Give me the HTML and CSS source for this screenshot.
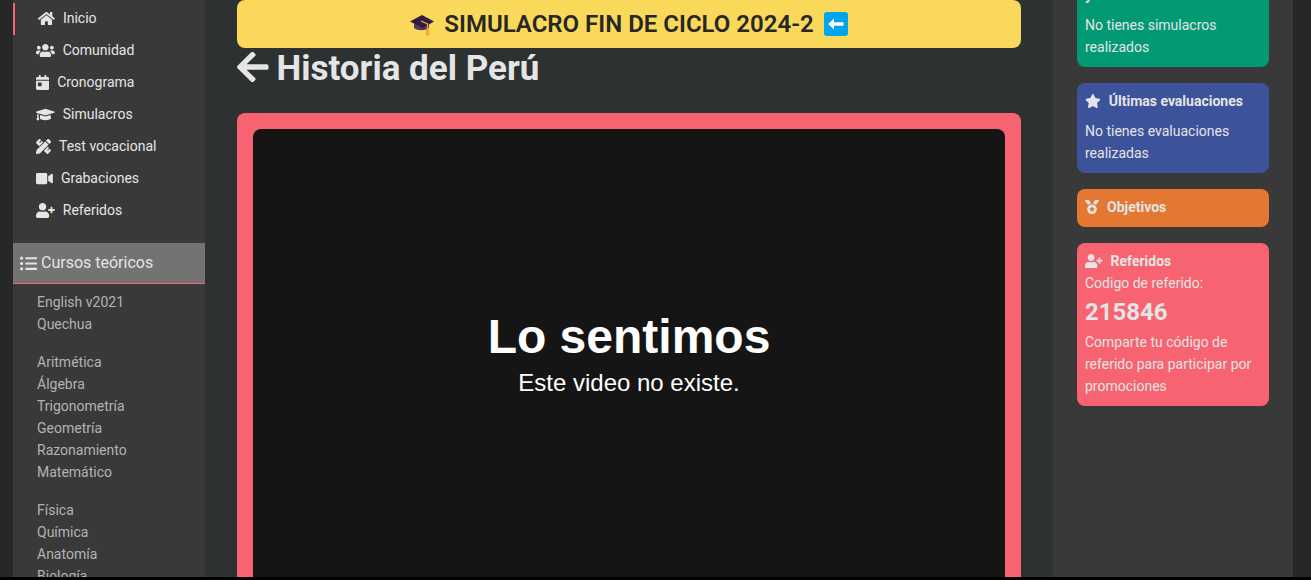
FILE: index.html
```
<!DOCTYPE html>
<html lang="es">
<head>
  <meta charset="UTF-8" />
  <meta name="viewport" content="width=device-width, initial-scale=1" />
  <title>Historia del Perú</title>
  <link rel="stylesheet" href="styles.css">
</head>
<body>

  <div class="layout">
    <aside class="sidebar">
      <nav class="menu">
        <a href="#" class="active"><svg class="icon" viewBox="0 0 576 512"><path d="M280.37 148.26L96 300.11V464a16 16 0 0 0 16 16l112.06-.29a16 16 0 0 0 15.92-16V368a16 16 0 0 1 16-16h64a16 16 0 0 1 16 16v95.64a16 16 0 0 0 16 16.05L464 480a16 16 0 0 0 16-16V300L295.67 148.26a12.19 12.19 0 0 0-15.3 0zM571.6 251.47L488 182.56V44.05a12 12 0 0 0-12-12h-56a12 12 0 0 0-12 12v72.61L318.47 43a48 48 0 0 0-61 0L4.34 251.47a12 12 0 0 0-1.6 16.9l25.5 31A12 12 0 0 0 45.15 301l235.22-193.74a12.19 12.19 0 0 1 15.3 0L530.9 301a12 12 0 0 0 16.9-1.6l25.5-31a12 12 0 0 0-1.7-16.93z"/></svg>Inicio</a>
        <a href="#"><svg class="icon" viewBox="0 0 640 512"><path d="M96 224c35.3 0 64-28.7 64-64s-28.7-64-64-64-64 28.7-64 64 28.7 64 64 64zm448 0c35.3 0 64-28.7 64-64s-28.7-64-64-64-64 28.7-64 64 28.7 64 64 64zm32 32h-64c-17.6 0-33.5 7.1-45.1 18.6 40.3 22.1 68.9 62 75.1 109.4h66c17.7 0 32-14.3 32-32v-32c0-35.3-28.7-64-64-64zm-256 0c61.9 0 112-50.1 112-112S381.9 32 320 32 208 82.1 208 144s50.1 112 112 112zm76.8 32h-8.3c-20.8 10-43.9 16-68.5 16s-47.6-6-68.5-16h-8.3C179.6 288 128 339.6 128 403.2V432c0 26.5 21.5 48 48 48h288c26.5 0 48-21.5 48-48v-28.8c0-63.6-51.6-115.2-115.2-115.2zm-223.7-13.4C161.5 263.1 145.6 256 128 256H64c-35.3 0-64 28.7-64 64v32c0 17.7 14.3 32 32 32h65.9c6.3-47.4 34.9-87.3 75.2-109.4z"/></svg>Comunidad</a>
        <a href="#"><svg class="icon" viewBox="0 0 448 512"><path d="M0 464c0 26.5 21.5 48 48 48h352c26.5 0 48-21.5 48-48V192H0v272zm64-192c0-8.8 7.2-16 16-16h96c8.8 0 16 7.2 16 16v96c0 8.8-7.2 16-16 16H80c-8.8 0-16-7.2-16-16v-96zM400 64h-48V16c0-8.8-7.2-16-16-16h-32c-8.8 0-16 7.2-16 16v48H160V16c0-8.8-7.2-16-16-16h-32c-8.8 0-16 7.2-16 16v48H48C21.5 64 0 85.5 0 112v48h448v-48c0-26.5-21.5-48-48-48z"/></svg>Cronograma</a>
        <a href="#"><svg class="icon" viewBox="0 0 640 512"><path d="M622.34 153.2L343.4 67.5c-15.2-4.67-31.6-4.67-46.79 0L17.66 153.2c-23.54 7.23-23.54 38.36 0 45.59l48.63 14.94c-10.67 13.19-17.23 29.28-17.88 46.9C38.78 266.15 32 276.11 32 288c0 10.78 5.68 19.85 13.86 25.65L20.33 428.53C18.11 438.52 25.71 448 35.94 448h56.11c10.24 0 17.84-9.48 15.62-19.47L82.14 313.65C90.32 307.85 96 298.78 96 288c0-11.57-6.47-21.25-15.66-26.87.76-15.02 8.44-28.3 20.69-36.72L296.6 284.5c9.06 2.78 26.44 6.25 46.79 0l278.95-85.7c23.55-7.24 23.55-38.36 0-45.6zM352.79 315.09c-28.53 8.76-52.84 3.92-65.59 0l-145.02-44.55L128 384c0 35.35 85.96 64 192 64s192-28.65 192-64l-14.18-113.47-145.03 44.56z"/></svg>Simulacros</a>
        <a href="#"><svg class="icon" viewBox="0 0 512 512"><path d="M109.46 244.04l134.58-134.56-44.12-44.12-61.68 61.68a7.919 7.919 0 0 1-11.21 0l-11.21-11.21c-3.1-3.1-3.1-8.12 0-11.21l61.68-61.68-33.64-33.65C131.47-3.1 111.39-3.1 99 9.29L9.29 99c-12.38 12.39-12.39 32.47 0 44.86l100.17 100.18zm388.47-116.8c18.76-18.76 18.75-49.17 0-67.93l-45.25-45.25c-18.76-18.76-49.18-18.76-67.95 0l-46.02 46.01 113.2 113.2 46.02-46.03zM316.08 82.71l-297 296.96L.32 487.11c-2.53 14.49 10.09 27.11 24.59 24.56l107.45-18.84L429.28 195.9 316.08 82.71zm186.63 285.43l-33.64-33.64-61.68 61.68c-3.1 3.1-8.12 3.1-11.21 0l-11.21-11.21c-3.09-3.1-3.09-8.12 0-11.21l61.68-61.68-44.14-44.14L267.93 402.5l100.21 100.2c12.39 12.39 32.47 12.39 44.86 0l89.71-89.7c12.39-12.39 12.39-32.47 0-44.86z"/></svg>Test vocacional</a>
        <a href="#"><svg class="icon" viewBox="0 0 576 512"><path d="M336.2 64H47.8C21.4 64 0 85.4 0 111.8v288.4C0 426.6 21.4 448 47.8 448h288.4c26.4 0 47.8-21.4 47.8-47.8V111.8c0-26.4-21.4-47.8-47.8-47.8zm189.4 37.7L416 177.3v157.4l109.6 75.5c21.2 14.6 50.4-.3 50.4-25.8V127.5c0-25.4-29.1-40.4-50.4-25.8z"/></svg>Grabaciones</a>
        <a href="#"><svg class="icon" viewBox="0 0 640 512"><path d="M624 208h-64v-64c0-8.8-7.2-16-16-16h-32c-8.8 0-16 7.2-16 16v64h-64c-8.8 0-16 7.2-16 16v32c0 8.8 7.2 16 16 16h64v64c0 8.8 7.2 16 16 16h32c8.8 0 16-7.2 16-16v-64h64c8.8 0 16-7.2 16-16v-32c0-8.8-7.2-16-16-16zm-400 48c70.7 0 128-57.3 128-128S294.7 0 224 0 96 57.3 96 128s57.3 128 128 128zm89.6 32h-16.7c-22.2 10.2-46.9 16-72.9 16s-50.6-5.8-72.9-16h-16.7C60.2 288 0 348.2 0 422.4V464c0 26.5 21.5 48 48 48h352c26.5 0 48-21.5 48-48v-41.6c0-74.2-60.2-134.4-134.4-134.4z"/></svg>Referidos</a>
      </nav>

      <h2 class="courses-title"><svg class="icon" viewBox="0 0 512 512"><path d="M48 48a48 48 0 1 0 48 48 48 48 0 0 0-48-48zm0 160a48 48 0 1 0 48 48 48 48 0 0 0-48-48zm0 160a48 48 0 1 0 48 48 48 48 0 0 0-48-48zm448 16H176a16 16 0 0 0-16 16v32a16 16 0 0 0 16 16h320a16 16 0 0 0 16-16v-32a16 16 0 0 0-16-16zm0-320H176a16 16 0 0 0-16 16v32a16 16 0 0 0 16 16h320a16 16 0 0 0 16-16V80a16 16 0 0 0-16-16zm0 160H176a16 16 0 0 0-16 16v32a16 16 0 0 0 16 16h320a16 16 0 0 0 16-16v-32a16 16 0 0 0-16-16z"/></svg>Cursos teóricos</h2>

      <div class="courses">
        <ul>
          <li><a href="#">English v2021</a></li>
          <li><a href="#">Quechua</a></li>
        </ul>
        <ul>
          <li><a href="#">Aritmética</a></li>
          <li><a href="#">Álgebra</a></li>
          <li><a href="#">Trigonometría</a></li>
          <li><a href="#">Geometría</a></li>
          <li><a href="#">Razonamiento Matemático</a></li>
        </ul>
        <ul>
          <li><a href="#">Física</a></li>
          <li><a href="#">Química</a></li>
          <li><a href="#">Anatomía</a></li>
          <li><a href="#">Biología</a></li>
        </ul>
      </div>
    </aside>

    <main class="content">
      <a href="#" class="banner">
        <svg class="emoji" viewBox="0 0 24 24">
          <path fill="#533566" d="M4 10v6c4 3 11 3 15 0v-6z"/>
          <path fill="#321b41" d="M0 9.5 12 3l12 6.5L13 16z"/>
          <path fill="none" stroke="#f9a82f" stroke-width="1.3" d="M11 9l6.5 3v6"/>
          <path fill="#f9a82f" d="M16.5 17h2.5l.5 6c-1 1-3 1-4 0z"/>
        </svg>
        SIMULACRO FIN DE CICLO 2024-2
        <svg class="emoji" viewBox="0 0 24 24">
          <rect fill="#00a6ed" width="24" height="24" rx="3"/>
          <path fill="#fff" d="M4 12l6-5.5v3.7h9.5v3.6H10v3.7z"/>
        </svg>
      </a>

      <h1 class="page-title">
        <a href="#" aria-label="Volver"><svg viewBox="0 0 448 512"><path d="M257.5 445.1l-22.2 22.2c-9.4 9.4-24.6 9.4-33.9 0L7 273c-9.4-9.4-9.4-24.6 0-33.9L201.4 44.7c9.4-9.4 24.6-9.4 33.9 0l22.2 22.2c9.5 9.5 9.3 25-.4 34.3L136.6 216H424c13.3 0 24 10.7 24 24v32c0 13.3-10.7 24-24 24H136.6l120.5 114.8c9.8 9.3 10 24.8.4 34.3z"/></svg></a>
        Historia del Perú
      </h1>

      <div class="video-card">
        <div class="video">
          <h2>Lo sentimos</h2>
          <p>Este video no existe.</p>
        </div>
      </div>
    </main>

    <aside class="widgets">
      <section class="card green">
        <h3>y</h3>
        <p>No tienes simulacros realizados</p>
      </section>

      <section class="card blue">
        <h3><svg class="icon" viewBox="0 0 576 512"><path d="M259.3 17.8L194 150.2 47.9 171.5c-26.2 3.8-36.7 36.1-17.7 54.6l105.7 103-25 145.5c-4.5 26.3 23.2 46 46.4 33.7L288 439.6l130.7 68.7c23.2 12.2 50.9-7.4 46.4-33.7l-25-145.5 105.7-103c19-18.5 8.5-50.8-17.7-54.6L382 150.2 316.7 17.8c-11.7-23.6-45.6-23.9-57.4 0z"/></svg>Últimas evaluaciones</h3>
        <p>No tienes evaluaciones realizadas</p>
      </section>

      <section class="card orange">
        <h3><svg class="icon" viewBox="0 0 512 512"><path d="M223.75 130.75L154.62 15.54A31.997 31.997 0 0 0 127.18 0H16.03C3.08 0-4.5 14.57 2.92 25.18l111.27 158.96c29.72-27.77 67.52-46.83 109.56-53.39zM495.97 0H384.82c-11.24 0-21.66 5.9-27.44 15.54l-69.13 115.21c42.04 6.56 79.84 25.62 109.56 53.38L509.08 25.18C516.5 14.57 508.92 0 495.97 0zM256 160c-97.2 0-176 78.8-176 176s78.8 176 176 176 176-78.8 176-176-78.8-176-176-176zm92.52 157.26l-37.93 36.96 8.97 52.22c1.6 9.36-8.26 16.51-16.65 12.09L256 393.88l-46.9 24.65c-8.4 4.45-18.25-2.74-16.65-12.09l8.97-52.22-37.93-36.96c-6.82-6.64-3.05-18.23 6.35-19.59l52.43-7.64 23.43-47.52c2.11-4.28 6.19-6.39 10.28-6.39 4.11 0 8.22 2.14 10.33 6.39l23.43 47.52 52.43 7.64c9.4 1.36 13.17 12.95 6.35 19.59z"/></svg>Objetivos</h3>
      </section>

      <section class="card pink">
        <h3><svg class="icon" viewBox="0 0 640 512"><path d="M624 208h-64v-64c0-8.8-7.2-16-16-16h-32c-8.8 0-16 7.2-16 16v64h-64c-8.8 0-16 7.2-16 16v32c0 8.8 7.2 16 16 16h64v64c0 8.8 7.2 16 16 16h32c8.8 0 16-7.2 16-16v-64h64c8.8 0 16-7.2 16-16v-32c0-8.8-7.2-16-16-16zm-400 48c70.7 0 128-57.3 128-128S294.7 0 224 0 96 57.3 96 128s57.3 128 128 128zm89.6 32h-16.7c-22.2 10.2-46.9 16-72.9 16s-50.6-5.8-72.9-16h-16.7C60.2 288 0 348.2 0 422.4V464c0 26.5 21.5 48 48 48h352c26.5 0 48-21.5 48-48v-41.6c0-74.2-60.2-134.4-134.4-134.4z"/></svg>Referidos</h3>
        <p>Codigo de referido:</p>
        <strong class="code">215846</strong>
        <p>Comparte tu código de referido para participar por promociones</p>
      </section>
    </aside>
  </div>

</body>
</html>
```

FILE: styles.css
```
* {
  box-sizing: border-box;
}

body {
  margin: 0;
  height: 100vh;
  overflow: hidden;
  font-family: Roboto, sans-serif;
  font-size: 14px;
  line-height: 22px;
  color: #e5e5e5;
  background: #272727;
  border-bottom: 3px solid #000;
}

h1, h2, h3, p, ul {
  margin: 0;
  padding: 0;
}

a {
  color: inherit;
  text-decoration: none;
}

.icon {
  height: 14px;
  fill: currentColor;
  flex: none;
}

.layout {
  display: grid;
  grid-template-columns: 192px 1fr 240px;
  height: 100%;
  padding: 0 18px 0 13px;
  overflow: hidden;
}

/* left menu */
.sidebar {
  min-height: 0;
  padding-top: 3px;
  background: #393939;
  overflow: hidden;
}

.menu {
  margin-bottom: 16px;
}

.menu a {
  display: flex;
  align-items: center;
  gap: 8px;
  height: 32px;
  padding: 0 23px 2px;
}

.menu .icon {
  height: 15px;
}

.menu a.active {
  border-left: 2px solid #f76370;
}

.courses-title {
  display: flex;
  align-items: center;
  gap: 4px;
  padding: 9px 7px;
  font-size: 16px;
  font-weight: 400;
  background: #737373;
  border-bottom: 1px solid #f76370;
}

.courses-title .icon {
  height: 17px;
}

.courses {
  padding: 7px 24px;
  color: #b3b3b3;
}

.courses ul {
  list-style: none;
  margin-bottom: 16px;
}

/* center */
.content {
  min-height: 0;
  padding: 0 32px;
  background: #2d3132;
  overflow: hidden;
}

.banner {
  display: flex;
  align-items: center;
  justify-content: center;
  gap: 10px;
  height: 48px;
  border-radius: 8px;
  background: #fad859;
  color: #272727;
  font-size: 24px;
  font-weight: 600;
}

.emoji {
  width: 24px;
  height: 24px;
}

.page-title {
  display: flex;
  align-items: flex-start;
  gap: 8px;
  padding: 1px 0 24px;
  font-size: 35px;
  line-height: 40px;
}

.page-title svg {
  display: block;
  height: 36px;
  fill: currentColor;
}

.video-card {
  padding: 16px;
  border-radius: 8px;
  background: #f76370;
}

.video {
  display: flex;
  flex-direction: column;
  align-items: center;
  justify-content: center;
  height: 82vh;
  padding-bottom: 24px;
  border-radius: 8px;
  background: #151515;
  color: #fff;
  font-family: "Liberation Sans", Arial, sans-serif;
  text-align: center;
}

.video h2 {
  font-size: 48px;
  line-height: 56px;
}

.video p {
  font-size: 24px;
  line-height: 36px;
}

/* right widgets, scrolled so the first card starts above the window */
.widgets {
  display: flex;
  flex-direction: column;
  gap: 16px;
  min-height: 0;
  margin-top: -23px;
  padding: 0 24px;
  background: #393939;
}

.card {
  padding: 7px 8px 9px;
  border-radius: 8px;
}

.card h3 {
  display: flex;
  align-items: center;
  gap: 8px;
  font-size: 14px;
  font-weight: 700;
}

.card h3 + p {
  margin-top: 8px;
}

.card.pink h3 + p {
  margin-top: 0;
}

.green {
  background: #029975;
}

.blue {
  background: #3c529b;
}

.orange {
  background: #e47833;
}

.pink {
  background: #f76370;
}

.code {
  display: block;
  font-size: 24px;
  line-height: 37px;
}
```
